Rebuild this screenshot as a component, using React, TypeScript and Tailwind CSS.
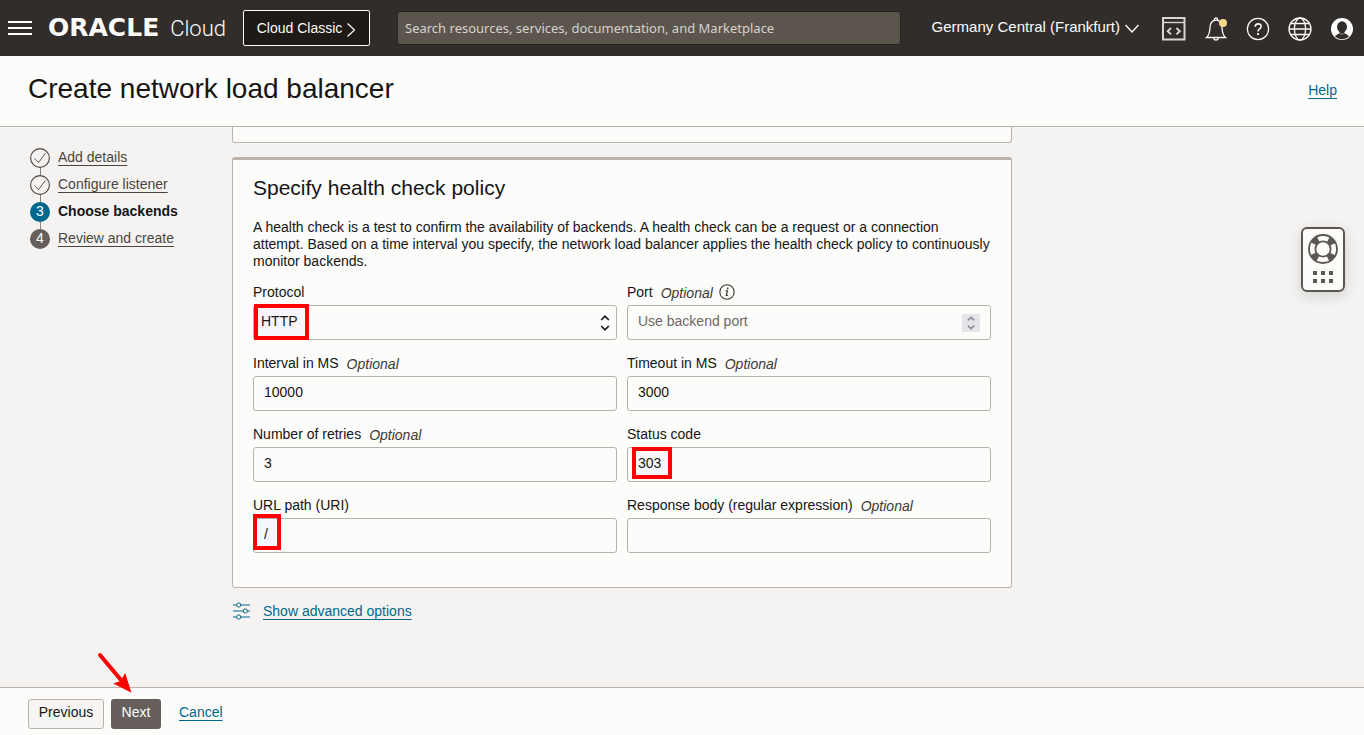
import { useState } from 'react';
import type { ReactNode } from 'react';

const steps = [
    { id: 1, label: 'Add details', state: 'done' },
    { id: 2, label: 'Configure listener', state: 'done' },
    { id: 3, label: 'Choose backends', state: 'current' },
    { id: 4, label: 'Review and create', state: 'todo' },
];

const inputClass =
    'block h-[35px] w-full rounded-[3px] border border-[#bbb3ab] bg-transparent px-2.5 pb-[3px] text-sm text-[#161513] placeholder:text-[#6f6964] placeholder:opacity-100 outline-none focus:border-[#00688c]';

function HeaderIcons() {
    const button = 'flex h-6 w-6 items-center justify-center';

    return (
        <div className="flex items-center gap-[18px] pt-0.5">
            <button className={button} aria-label="Developer tools">
                <svg width="24" height="24" viewBox="0 0 24 24" fill="none" stroke="#d8d6d3">
                    <rect x="1" y="1" width="21.500" height="21.500" strokeWidth="2" />
                    <path d="M1 5.500h22" strokeWidth="1.400" />
                    <path d="m9 11-3.300 3.200L9 17.400M14.500 11l3.300 3.200-3.300 3.200" strokeWidth="1.900" />
                </svg>
            </button>
            <button className={button} aria-label="Announcements">
                <svg width="24" height="26" viewBox="0 0 24 26" fill="none" stroke="#fcfbfa" strokeWidth="1.300">
                    <path d="M2.500 21.500c2.800-2.200 3.200-4.800 3.500-10C6.300 6.800 8.300 4.200 12 4.200s5.700 2.600 6 7.300c.3 5.200.7 7.800 3.500 10z" />
                    <path d="M10.300 4.200c0-3.200 3.400-3.200 3.400 0M9.600 21.700c.4 3.300 4.400 3.300 4.800 0" />
                    <circle cx="19" cy="7" r="4" fill="#f6d78b" stroke="none" />
                </svg>
            </button>
            <button className={button} aria-label="Help menu">
                <svg width="24" height="24" viewBox="0 0 24 24" fill="none" stroke="#fcfbfa" strokeWidth="1.200">
                    <circle cx="12" cy="12" r="10.600" />
                    <path d="M9.200 9.800c0-3.900 5.900-3.800 5.900-.4 0 2.500-3.100 2.400-3.100 5" strokeWidth="1.600" />
                    <path d="M12 16v2" strokeWidth="1.800" />
                </svg>
            </button>
            <button className={button} aria-label="Language">
                <svg width="24" height="24" viewBox="0 0 24 24" fill="none" stroke="#fcfbfa" strokeWidth="1.300">
                    <circle cx="12" cy="12" r="11" />
                    <ellipse cx="12" cy="12" rx="5.600" ry="11" />
                    <path d="M1 12h22M2.800 6.500h18.400M2.800 17.500h18.400" />
                </svg>
            </button>
            <button className={button} aria-label="Profile">
                <svg width="24" height="24" viewBox="0 0 24 24">
                    <circle cx="12" cy="12" r="11" fill="#fff" />
                    <ellipse cx="12" cy="10" rx="5" ry="5.800" fill="#312d2a" />
                    <path
                        d="M9.600 14.500h4.800v1.600c1.200 1.200 3.400 1.500 4.600 3.500-3.800 3.400-10.200 3.400-14 0 1.200-2 3.400-2.300 4.600-3.500z"
                        fill="#312d2a"
                    />
                    <path d="M9.300 16.200c1.700 1.100 3.700 1.100 5.400 0" fill="none" stroke="#8f8b88" />
                </svg>
            </button>
        </div>
    );
}

function Header() {
    return (
        <header className="flex h-14 shrink-0 items-center bg-[#312d2a] pl-2 pr-2.5 text-[#fcfbfa]">
            <button className="flex h-6 w-6 items-center" aria-label="Navigation menu">
                <svg width="24" height="14" viewBox="0 0 24 14" fill="#fff">
                    <path d="M0 0h24v2H0zM0 6h24v2H0zM0 12h24v2H0z" />
                </svg>
            </button>
            <a href="#home" className="ml-4 flex w-[178px] shrink-0 items-baseline justify-between leading-7 whitespace-nowrap">
                <span className="font-['DejaVu_Sans',sans-serif] text-[25px] leading-7 font-bold">ORACLE</span>
                <span className="font-[Roboto,sans-serif] text-[22px] leading-7 font-light">Cloud</span>
            </a>
            <button className="ml-[17px] flex h-9 w-[127px] shrink-0 items-center justify-center gap-1 rounded-xs border border-[#fcfbfa] bg-[#1e1a17] text-sm">
                Cloud Classic
                <svg width="10" height="16" viewBox="0 0 10 16" fill="none" stroke="#fcfbfa" strokeWidth="1.200" className="mt-1">
                    <path d="m1.500 1.500 7 6.500-7 6.500" />
                </svg>
            </button>
            <input
                type="search"
                aria-label="Search"
                placeholder="Search resources, services, documentation, and Marketplace"
                className="ml-[27px] h-[34px] max-w-[504px] min-w-0 flex-1 rounded-[3px] border border-[#27231f] bg-[#5b554e] px-[7px] font-['Noto_Sans',sans-serif] text-[13px] outline-none placeholder:text-[#d6d3cf] placeholder:opacity-100"
            />
            <div className="ml-auto flex items-center gap-[22px]">
                <button className="flex items-center gap-1 pb-0.5 text-[15px] leading-5 whitespace-nowrap">
                    Germany Central (Frankfurt)
                    <svg width="16" height="10" viewBox="0 0 16 10" fill="none" stroke="#fcfbfa" strokeWidth="1.400" className="mt-1">
                        <path d="m1.500 1 6.500 7 6.500-7" />
                    </svg>
                </button>
                <HeaderIcons />
            </div>
        </header>
    );
}

function StepMark({ id, state }: { id: number; state: string }) {
    if (state === 'done') {
        return (
            <svg width="20" height="20" viewBox="0 0 20 20" fill="none" stroke="#4a4541">
                <circle cx="10" cy="10" r="9.400" strokeWidth="1.100" />
                <path d="m4.500 10.500 4 4.200 6.800-9.400" strokeWidth=".9" />
            </svg>
        );
    }
    return (
        <span
            className={`flex h-5 w-5 items-center justify-center rounded-full pb-0.5 text-sm leading-5 text-white ${
                state === 'current' ? 'bg-[#00688c]' : 'bg-[#665f5b]'
            }`}
        >
            {id}
        </span>
    );
}

function Steps() {
    return (
        <nav className="w-[232px] shrink-0 pt-[21px] pl-[30px]">
            <ol>
                {steps.map((step, i) => (
                    <li key={step.id}>
                        {i > 0 && <div className="ml-2.5 h-[7px] w-px bg-[#8b8580]" />}
                        <div className="flex h-5 items-center gap-2">
                            <StepMark id={step.id} state={step.state} />
                            {step.state === 'current' ? (
                                <span className="pb-0.5 text-sm leading-5 font-bold text-[#161513]">{step.label}</span>
                            ) : (
                                <a
                                    href={`#step-${step.id}`}
                                    className="pb-0.5 text-sm leading-5 text-[#4a4541] underline underline-offset-[3px]"
                                >
                                    {step.label}
                                </a>
                            )}
                        </div>
                    </li>
                ))}
            </ol>
        </nav>
    );
}

interface FieldProps {
    id: string;
    label: string;
    optional?: boolean;
    info?: boolean;
    children: ReactNode;
}

function Field({ id, label, optional, info, children }: FieldProps) {
    return (
        <div>
            <div className="mb-0.5 flex h-5 items-center text-sm leading-5">
                <label htmlFor={id} className="pb-0.5">
                    {label}
                </label>
                {optional && <span className="ml-2 text-[#3f3a37] italic">Optional</span>}
                {info && (
                    <button type="button" className="ml-1.5 pb-0.5" aria-label="About the port">
                        <svg width="16" height="16" viewBox="0 0 16 16" fill="none" stroke="#3a3632">
                            <circle cx="8" cy="8" r="7.200" strokeWidth="1.100" />
                            <path d="M6.600 6.800h1.800l-1.100 4.500h1.600" strokeWidth="1.200" />
                            <circle cx="8.600" cy="4.400" r=".9" fill="#3a3632" stroke="none" />
                        </svg>
                    </button>
                )}
            </div>
            <div className="relative">{children}</div>
        </div>
    );
}

// red frame drawn over a value that the reader has to check
function Highlight({ className }: { className: string }) {
    return <div className={`pointer-events-none absolute border-4 border-[#ff0000] bg-[#5050ff]/4 ${className}`} />;
}

function HealthCheck() {
    const [values, setValues] = useState({
        protocol: 'HTTP',
        port: '',
        interval: '10000',
        timeout: '3000',
        retries: '3',
        status: '303',
        url: '/',
        body: '',
    });

    const bind = (id: keyof typeof values) => ({
        id,
        value: values[id],
        onChange: (e: { target: { value: string } }) => setValues({ ...values, [id]: e.target.value }),
    });

    return (
        <section className="rounded-[3px] border border-t-[3px] border-[#bbb3ab] bg-[#fcfcfb] px-5 pt-3.5 pb-[34px]">
            <h2 className="text-[21px] leading-7">Specify health check policy</h2>
            <p className="mt-[17px] text-sm leading-[17px]">
                A health check is a test to confirm the availability of backends. A health check can be a request or a connection
                attempt. Based on a time interval you specify, the network load balancer applies the health check policy to
                continuously monitor backends.
            </p>
            <form className="mt-[13px] grid grid-cols-2 gap-x-2.5 gap-y-3.5">
                <Field id="protocol" label="Protocol">
                    <select {...bind('protocol')} className={`${inputClass} appearance-none pl-[7px]`}>
                        <option>HTTP</option>
                        <option>HTTPS</option>
                        <option>TCP</option>
                        <option>UDP</option>
                    </select>
                    <svg
                        width="10"
                        height="16"
                        viewBox="0 0 10 16"
                        fill="none"
                        stroke="#161513"
                        strokeWidth="1.600"
                        className="pointer-events-none absolute top-[10px] right-[7px]"
                    >
                        <path d="m1.200 5 3.800-3.800L8.800 5M1.200 11 5 14.800 8.800 11" />
                    </svg>
                    <Highlight className="-top-px left-px h-9 w-[55px]" />
                </Field>
                <Field id="port" label="Port" optional info>
                    <input {...bind('port')} placeholder="Use backend port" className={inputClass} />
                    <button
                        type="button"
                        aria-label="Change port"
                        className="absolute top-[9px] right-[11px] flex h-[18px] w-[18px] items-center justify-center bg-[#e6e4e9]"
                    >
                        <svg width="8" height="14" viewBox="0 0 8 14" fill="none" stroke="#8d8b96" strokeWidth="1.600">
                            <path d="m.8 4.400 3.200-3 3.200 3M.8 9.600l3.200 3 3.200-3" />
                        </svg>
                    </button>
                </Field>
                <Field id="interval" label="Interval in MS" optional>
                    <input {...bind('interval')} className={inputClass} />
                </Field>
                <Field id="timeout" label="Timeout in MS" optional>
                    <input {...bind('timeout')} className={inputClass} />
                </Field>
                <Field id="retries" label="Number of retries" optional>
                    <input {...bind('retries')} className={inputClass} />
                </Field>
                <Field id="status" label="Status code">
                    <input {...bind('status')} className={inputClass} />
                    <Highlight className="top-0 left-[5px] h-8 w-10" />
                </Field>
                <Field id="url" label="URL path (URI)">
                    <input {...bind('url')} className={inputClass} />
                    <Highlight className="-top-1 left-0 h-9 w-7" />
                </Field>
                <Field id="body" label="Response body (regular expression)" optional>
                    <input {...bind('body')} className={inputClass} />
                </Field>
            </form>
        </section>
    );
}

function SupportWidget() {
    return (
        <button
            aria-label="Support"
            className="fixed top-[227px] right-[19px] flex h-[65px] w-11 flex-col items-center rounded-md border-2 border-[#5b5652] bg-[#fcfcfb] pt-[5px] shadow-[0_4px_14px_rgba(0,0,0,0.14)]"
        >
            <svg width="30" height="30" viewBox="0 0 30 30" fill="none" stroke="#5b5652">
                <circle cx="15" cy="15" r="11" strokeWidth="6" strokeDasharray="6.600 10.680" strokeDashoffset="-5.340" />
                <circle cx="15" cy="15" r="14" strokeWidth="1.800" />
                <circle cx="15" cy="15" r="7.600" strokeWidth="1.800" />
            </svg>
            <svg width="20" height="12" viewBox="0 0 20 12" fill="#5b5652" className="mt-[7px]">
                <path d="M0 0h4v4H0zM8 0h4v4H8zM16 0h4v4h-4zM0 8h4v4H0zM8 8h4v4H8zM16 8h4v4h-4z" />
            </svg>
        </button>
    );
}

function Footer() {
    return (
        <footer className="relative flex h-12 shrink-0 items-center border-t border-[#bbb3ab] bg-[#fcfcfb] px-7 pt-1 text-sm">
            <button className="h-[30px] w-19 rounded-[3px] border border-[#bbb3ab] bg-[#f6f5f3] pb-1">Previous</button>
            <button className="ml-[7px] h-[30px] w-[50px] rounded-[3px] bg-[#665f5b] pb-1 text-white">Next</button>
            <a href="#cancel" className="ml-[18px] pb-1 text-[#00688c] underline underline-offset-[3px]">
                Cancel
            </a>
            <svg
                width="36"
                height="42"
                viewBox="0 0 36 42"
                fill="#ff0000"
                className="pointer-events-none absolute -top-9 left-24"
            >
                <path d="m4 3 21 25" stroke="#ff0000" strokeWidth="4" strokeLinecap="round" />
                <path d="M35.500 40.700 17.300 31.500l7.200-2.500 4.700-8z" />
            </svg>
        </footer>
    );
}

export default function App() {
    return (
        <div className="flex h-screen flex-col bg-[#f4f3f2] font-['Liberation_Sans',Arial,sans-serif] text-[#161513]">
            <Header />
            <div className="flex h-[71px] shrink-0 items-center justify-between border-b border-[#bbb3ab] bg-[#fcfcfb] pr-[27px] pb-1 pl-7">
                <h1 className="text-[28px] leading-9">Create network load balancer</h1>
                <a href="#help" className="pt-0.5 text-sm text-[#00688c] underline underline-offset-[3px]">
                    Help
                </a>
            </div>
            <div className="flex min-h-0 flex-1 overflow-hidden">
                <Steps />
                <main className="w-full max-w-[780px]">
                    <div className="mb-3.5 h-4 rounded-b-[3px] border border-t-0 border-[#bbb3ab] bg-[#fcfcfb]" />
                    <HealthCheck />
                    <div className="mt-[13px] flex items-center gap-3 pl-px">
                        <svg width="18" height="18" viewBox="0 0 18 18" fill="none" stroke="#00688c" strokeWidth="1">
                            <path d="M0 3h3.500M8 3h9M0 9h10M14.500 9H17M0 15h3.500M8 15h9" />
                            <circle cx="5.700" cy="3" r="2.100" />
                            <circle cx="12.300" cy="9" r="2.100" />
                            <circle cx="5.700" cy="15" r="2.100" />
                        </svg>
                        <a href="#advanced" className="text-sm text-[#00688c] underline underline-offset-[3px]">
                            Show advanced options
                        </a>
                    </div>
                </main>
            </div>
            <Footer />
            <SupportWidget />
        </div>
    );
}
